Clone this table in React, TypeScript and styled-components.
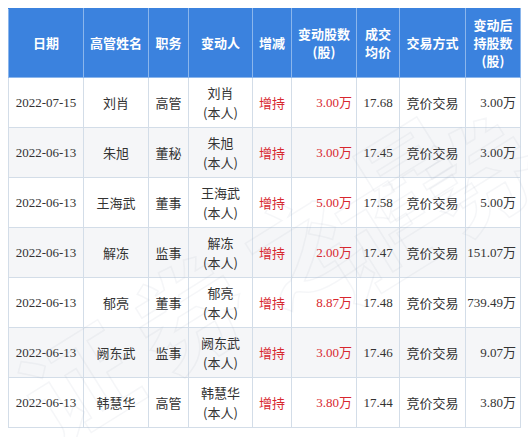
import styled, { createGlobalStyle } from "styled-components";

const GlobalStyle = createGlobalStyle`
  html, body {
    margin: 0;
    padding: 0;
    background: #fff;
  }
  body {
    font-family: "Liberation Serif", "Noto Sans CJK SC", serif;
  }
`;

const Page = styled.div`
  position: relative;
  width: 528px;
  height: 437px;
  padding: 8px;
  box-sizing: border-box;
  overflow: hidden;
`;

const Table = styled.table`
  width: 512px;
  max-width: 512px;
  border-collapse: collapse;
  table-layout: fixed;
`;

const HeadCell = styled.th<{ $w: number }>`
  width: ${(p) => p.$w}px;
  background: #3b82de;
  color: #fff;
  font-family: "Noto Sans CJK SC", sans-serif;
  font-size: 13px;
  font-weight: 700;
  line-height: 18px;
  height: 69px;
  padding: 0;
  border: 1px solid #8bb6ec;
  border-top-color: #3b82de;
  text-align: center;
  box-sizing: border-box;
  overflow: hidden;
`;

const Row = styled.tr<{ $alt: boolean }>`
  height: 50px;
  background: ${(p) => (p.$alt ? "#f5f6f8" : "#fff")};
`;

const Cell = styled.td<{ $align?: string; $red?: boolean; $cjk?: boolean }>`
  border: 1px solid #d3dde8;
  padding: 0 ${(p) => (p.$align === "right" ? "4px" : "0")} 0 0;
  font-size: 13px;
  line-height: 20px;
  color: ${(p) => (p.$red ? "#d8282f" : "#333")};
  text-align: ${(p) => p.$align ?? "center"};
  font-family: ${(p) =>
    p.$cjk ? `"Noto Sans CJK SC", sans-serif` : `"Liberation Serif", "Noto Sans CJK SC", serif`};
  white-space: nowrap;
  overflow: hidden;
`;

const Watermark = styled.div`
  position: absolute;
  pointer-events: none;
  font-family: "Noto Sans CJK SC", sans-serif;
  font-weight: 700;
  font-size: 110px;
  letter-spacing: 20px;
  color: transparent;
  -webkit-text-stroke: 1.5px rgba(170, 180, 195, 0.12);
  transform: rotate(-32deg);
  white-space: nowrap;
`;

const cols = [75, 65, 40, 64, 39, 65, 43, 66, 55];
const heads = ["日期", "高管姓名", "职务", "变动人", "增减", "变动股数(股)", "成交均价", "交易方式", "变动后持股数(股)"];

const rows = [
  ["2022-07-15", "刘肖", "高管", "3.00万", "17.68", "3.00万"],
  ["2022-06-13", "朱旭", "董秘", "3.00万", "17.45", "3.00万"],
  ["2022-06-13", "王海武", "董事", "5.00万", "17.58", "5.00万"],
  ["2022-06-13", "解冻", "监事", "2.00万", "17.47", "151.07万"],
  ["2022-06-13", "郁亮", "董事", "8.87万", "17.48", "739.49万"],
  ["2022-06-13", "阙东武", "监事", "3.00万", "17.46", "9.07万"],
  ["2022-06-13", "韩慧华", "高管", "3.80万", "17.44", "3.80万"],
];

const headLines: Record<string, string[]> = {
  "变动股数(股)": ["变动股数", "(股)"],
  "成交均价": ["成交", "均价"],
  "变动后持股数(股)": ["变动后", "持股数", "(股)"],
};

export default function App() {
  return (
    <Page>
      <GlobalStyle />
      <Table>
        <thead>
          <tr>
            {heads.map((h, i) => (
              <HeadCell key={h} $w={cols[i]}>
                {(headLines[h] ?? [h]).map((l, j) => (
                  <div key={j}>{l}</div>
                ))}
              </HeadCell>
            ))}
          </tr>
        </thead>
        <tbody>
          {rows.map((r, i) => (
            <Row key={i} $alt={i % 2 === 1}>
              <Cell>{r[0]}</Cell>
              <Cell $cjk>{r[1]}</Cell>
              <Cell $cjk>{r[2]}</Cell>
              <Cell $cjk>
                <div>{r[1]}</div>
                <div>(本人)</div>
              </Cell>
              <Cell $cjk $red>
                增持
              </Cell>
              <Cell $align="right" $red>
                {r[3]}
              </Cell>
              <Cell>{r[4]}</Cell>
              <Cell $cjk>竞价交易</Cell>
              <Cell $align="right">{r[5]}</Cell>
            </Row>
          ))}
        </tbody>
      </Table>
      <Watermark style={{ left: -10, top: 190 }}>证券之星</Watermark>
      <Watermark style={{ left: 300, top: 120 }}>证券</Watermark>
    </Page>
  );
}
